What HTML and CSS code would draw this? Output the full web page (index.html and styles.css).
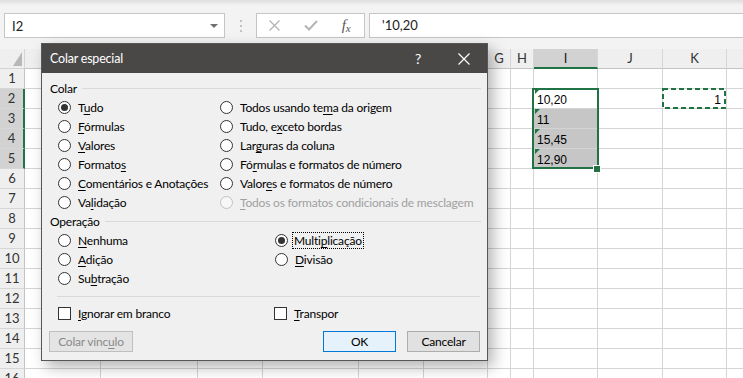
FILE: index.html
```html
<!DOCTYPE html>
<html lang="pt-BR">
<head>
  <meta charset="UTF-8">
  <title>Colar especial</title>
  <link rel="stylesheet" href="styles.css">
</head>
<body>
  <div class="topbar">
    <div class="namebox"><span>I2</span><span class="dd"></span></div>
    <div class="grip"><i></i><i></i><i></i></div>
    <div class="fxbox">
      <span class="fxicon">
        <svg width="11" height="11" viewBox="0 0 11 11"><path d="M0.5 0.5L10.5 10.5M10.5 0.5L0.5 10.5" stroke="#b4b4b4" stroke-width="1.3" fill="none"/></svg>
      </span>
      <span class="fxicon">
        <svg width="14" height="11" viewBox="0 0 14 11"><path d="M1 5.5L5 9.5L13 1" stroke="#b4b4b4" stroke-width="2" fill="none"/></svg>
      </span>
      <span class="fxicon fx"><i>f</i><i class="x">x</i></span>
    </div>
    <div class="formula">'10,20</div>
  </div>

  <div class="sheet" id="sheet"></div>

  <div class="dialog">
    <div class="dlg-title">
      <span class="dlg-caption">Colar especial</span>
      <span class="dlg-btn">?</span>
      <span class="dlg-btn">
        <svg width="12" height="12" viewBox="0 0 12 12"><path d="M0.5 0.5L11.5 11.5M11.5 0.5L0.5 11.5" stroke="#fff" stroke-width="1.2" fill="none"/></svg>
      </span>
    </div>
    <div class="dlg-body">
      <div class="group-label"><span>Colar</span></div>
      <div class="opts paste">
        <label class="opt"><span class="radio on"></span><span>T<u>u</u>do</span></label>
        <label class="opt"><span class="radio"></span><span>Todos usando te<u>m</u>a da origem</span></label>
        <label class="opt"><span class="radio"></span><span><u>F</u>órmulas</span></label>
        <label class="opt"><span class="radio"></span><span>Tudo, e<u>x</u>ceto bordas</span></label>
        <label class="opt"><span class="radio"></span><span><u>V</u>alores</span></label>
        <label class="opt"><span class="radio"></span><span>Lar<u>g</u>uras da coluna</span></label>
        <label class="opt"><span class="radio"></span><span>Formato<u>s</u></span></label>
        <label class="opt"><span class="radio"></span><span>Fó<u>r</u>mulas e formatos de número</span></label>
        <label class="opt"><span class="radio"></span><span><u>C</u>omentários e Anotações</span></label>
        <label class="opt"><span class="radio"></span><span>Valor<u>e</u>s e formatos de número</span></label>
        <label class="opt"><span class="radio"></span><span>Va<u>l</u>idação</span></label>
        <label class="opt disabled"><span class="radio"></span><span><u>T</u>odos os formatos condicionais de mesclagem</span></label>
      </div>
      <div class="group-label"><span>Operação</span></div>
      <div class="opts ops">
        <label class="opt"><span class="radio"></span><span><u>N</u>enhuma</span></label>
        <label class="opt"><span class="radio on"></span><span class="focus">Multi<u>p</u>licação</span></label>
        <label class="opt"><span class="radio"></span><span><u>A</u>dição</span></label>
        <label class="opt"><span class="radio"></span><span><u>D</u>ivisão</span></label>
        <label class="opt"><span class="radio"></span><span>Su<u>b</u>tração</span></label>
      </div>
      <div class="sep"></div>
      <div class="opts checks">
        <label class="opt"><span class="check"></span><span><u>I</u>gnorar em branco</span></label>
        <label class="opt"><span class="check"></span><span><u>T</u>ranspor</span></label>
      </div>
      <div class="dlg-buttons">
        <button class="btn link" disabled>Colar vínc<u>u</u>lo</button>
        <span class="spacer"></span>
        <button class="btn default">OK</button>
        <button class="btn">Cancelar</button>
      </div>
    </div>
  </div>

  <script>
    // columns A-F sit under the dialog and L is past the edge, so only G-K get a label
    const cols = ["A", "B", "C", "D", "E", "F", "G", "H", "I", "J", "K", "L"];
    const shown = ["G", "H", "I", "J", "K"];
    const textCells = { I2: "10,20", I3: "11", I4: "15,45", I5: "12,90" };
    const numberCells = { K2: "1" };
    const sheet = document.getElementById("sheet");

    function add(cls, text) {
      const d = document.createElement("div");
      d.className = cls;
      if (text !== undefined) d.textContent = text;
      sheet.appendChild(d);
      return d;
    }

    add("corner");
    cols.forEach(c => add(c === "I" ? "colhead sel" : "colhead", shown.includes(c) ? c : undefined));

    for (let r = 1; r <= 16; r++) {
      const inSel = r >= 2 && r <= 5;
      add(inSel ? "rowhead sel" : "rowhead", r);
      cols.forEach(c => {
        const ref = c + r;
        let cls = "cell";
        if (c === "I" && r >= 3 && r <= 5) cls += " hl";
        if (textCells[ref]) cls += " txt";
        if (numberCells[ref]) cls += " num";
        const cell = add(cls);

        if (textCells[ref]) {
          cell.innerHTML = '<span class="flag"></span>' + textCells[ref];
        }
        if (numberCells[ref]) {
          cell.textContent = numberCells[ref];
          cell.insertAdjacentHTML("afterbegin",
            '<svg class="ants" width="64" height="21"><rect x="1" y="1" width="62" height="19" fill="none" stroke="#217346" stroke-width="2" stroke-dasharray="5 3"/></svg>');
        }
        if (ref === "I2") {
          cell.insertAdjacentHTML("beforeend", '<span class="selbox"></span><span class="handle"></span>');
        }
      });
    }
  </script>
</body>
</html>
```

FILE: styles.css
```css
html, body {
  margin: 0;
  height: 378px;
  overflow: hidden;
}
body {
  position: relative;
  font-family: "Lato", "Noto Sans", sans-serif;
  background: #fff;
  color: #000;
}

/* formula bar */
.topbar {
  height: 49px;
  box-sizing: border-box;
  padding-top: 13px;
  display: flex;
  align-items: flex-start;
  background: linear-gradient(#dedede 0, #e9e9e9 3px, #f3f3f3 5px);
}
.namebox {
  margin-left: 4px;
  width: 221px;
  height: 25px;
  box-sizing: border-box;
  border: 1px solid #c6c6c6;
  background: #fff;
  display: flex;
  align-items: center;
  justify-content: space-between;
  padding: 0 6px 0 7px;
  font-size: 13px;
  color: #222;
}
.dd {
  width: 0;
  height: 0;
  border-left: 4px solid transparent;
  border-right: 4px solid transparent;
  border-top: 4px solid #707070;
}
.grip {
  width: 31px;
  height: 25px;
  display: flex;
  flex-direction: column;
  align-items: center;
  justify-content: center;
  gap: 3px;
}
.grip i {
  width: 2px;
  height: 2px;
  background: #c2c2c2;
}
.fxbox {
  width: 109px;
  height: 25px;
  box-sizing: border-box;
  border: 1px solid #c6c6c6;
  background: #fff;
  display: flex;
}
.fxicon {
  width: 36px;
  display: flex;
  align-items: center;
  justify-content: center;
}
.fx {
  font-family: "Liberation Serif", serif;
  font-size: 15px;
  color: #555;
}
.fx .x {
  font-size: 11px;
  margin-top: 4px;
}
.formula {
  flex: 1;
  margin-left: 4px;
  height: 25px;
  box-sizing: border-box;
  border: 1px solid #c6c6c6;
  border-right: none;
  background: #fff;
  padding-left: 12px;
  font-size: 13px;
  line-height: 23px;
  color: #222;
}

/* sheet grid */
.sheet {
  display: grid;
  grid-template-columns: 25px 76px 97px 65px 96px 65px 64px 23px 23px 64px 65px 64px 64px;
  grid-auto-rows: 20px;
  width: 743px;
  overflow: hidden;
  font-size: 12px;
}
.sheet > div {
  box-sizing: border-box;
  border-right: 1px solid #d4d4d4;
  border-bottom: 1px solid #d4d4d4;
  position: relative;
}
.corner {
  background: #efefef;
}
.corner::after {
  content: "";
  position: absolute;
  right: 2px;
  bottom: 2px;
  border-left: 9px solid transparent;
  border-bottom: 14px solid #b7b7b7;
}
.sheet > .colhead {
  background: #efefef;
  border-right-color: #d6d6d6;
  border-bottom-color: #c4c4c4;
  text-align: center;
  line-height: 19px;
  color: #333;
  font-size: 13px;
}
.sheet > .colhead.sel {
  background: #d2d2d2;
  border-bottom: 2px solid #217346;
  color: #1b1b1b;
}
.sheet > .rowhead {
  background: #efefef;
  border-right-color: #c4c4c4;
  border-bottom-color: #d6d6d6;
  text-align: center;
  line-height: 19px;
  color: #333;
  font-size: 13px;
}
.sheet > .rowhead.sel {
  background: #d2d2d2;
  border-right: 2px solid #217346;
}
.cell.hl {
  background: #c6c6c6;
}
.cell.txt, .cell.num {
  display: flex;
  align-items: flex-end;
  padding: 0 3px 1px;
  font-family: "Liberation Sans", sans-serif;
  font-size: 12px;
  line-height: 14px;
}
.cell.num {
  justify-content: flex-end;
  padding-right: 5px;
}
.flag {
  position: absolute;
  left: 1px;
  top: 0;
  border-top: 5px solid #217346;
  border-right: 5px solid transparent;
}
.selbox {
  position: absolute;
  left: -2px;
  top: -1px;
  width: 67px;
  height: 81px;
  box-sizing: border-box;
  border: 2px solid #217346;
  z-index: 2;
}
.handle {
  position: absolute;
  left: 59px;
  top: 76px;
  width: 6px;
  height: 6px;
  background: #217346;
  border: 1px solid #fff;
  z-index: 3;
}
.ants {
  position: absolute;
  left: -1px;
  top: -1px;
}

/* dialog */
.dialog {
  position: absolute;
  left: 41px;
  top: 43px;
  width: 447px;
  height: 318px;
  box-sizing: border-box;
  border: 1px solid #575757;
  background: #f0f0f0;
  box-shadow: 5px 6px 14px rgba(0, 0, 0, 0.3);
  font-size: 12px;
  letter-spacing: -0.2px;
  z-index: 10;
}
.dlg-title {
  height: 29px;
  background: #4a4846;
  display: flex;
  align-items: center;
  color: #fff;
}
.dlg-caption {
  flex: 1;
  padding-left: 8px;
  font-size: 12.5px;
}
.dlg-btn {
  width: 46px;
  height: 29px;
  display: flex;
  align-items: center;
  justify-content: center;
  font-size: 14px;
}
.dlg-body {
  padding: 6px 6px 0 8px;
}
.group-label {
  height: 19px;
  display: flex;
  align-items: center;
  gap: 5px;
}
.group-label::after {
  content: "";
  flex: 1;
  border-top: 1px solid #d9d9d9;
}
.opts {
  display: grid;
  grid-auto-rows: 19px;
  padding-left: 8px;
}
.paste {
  grid-template-columns: 162px 1fr;
}
.ops {
  grid-template-columns: 217px 1fr;
  grid-auto-flow: column;
  grid-template-rows: repeat(3, 19px);
}
.ops .opt:nth-child(2) {
  grid-column: 2;
  grid-row: 1;
}
.ops .opt:nth-child(4) {
  grid-column: 2;
  grid-row: 2;
}
.checks {
  grid-template-columns: 216px 1fr;
}
.opt {
  display: flex;
  align-items: center;
  gap: 7px;
  white-space: nowrap;
}
.opt u, .btn u {
  text-decoration-skip-ink: none;
  text-underline-offset: 2px;
}
.radio {
  width: 13px;
  height: 13px;
  flex: none;
  box-sizing: border-box;
  border: 1px solid #333;
  border-radius: 50%;
  background: #fff;
  display: flex;
  align-items: center;
  justify-content: center;
}
.radio.on::after {
  content: "";
  width: 7px;
  height: 7px;
  border-radius: 50%;
  background: #333;
}
.opt.disabled {
  color: #a0a0a0;
}
.opt.disabled .radio {
  border-color: #c2c2c2;
  background: #f7f7f7;
}
.focus {
  outline: 1px dotted #000;
  padding: 0 1px;
  margin-left: -2px;
}
.check {
  width: 13px;
  height: 13px;
  flex: none;
  box-sizing: border-box;
  border: 1px solid #333;
  background: #fff;
}
.sep {
  height: 1px;
  background: #d9d9d9;
  margin: 8px 1px 7px 7px;
}
.dlg-buttons {
  display: flex;
  gap: 11px;
  margin-top: 8px;
  padding-right: 1px;
}
.spacer {
  flex: 1;
}
.btn {
  height: 21px;
  width: 73px;
  box-sizing: border-box;
  border: 1px solid #adadad;
  background: #e1e1e1;
  font-family: inherit;
  font-size: 12px;
  letter-spacing: inherit;
  color: #000;
  padding: 0;
}
.btn.link {
  width: 84px;
  margin-left: -1px;
  border-color: #bfbfbf;
  background: #e4e4e4;
  color: #8a8a8a;
}
.btn.default {
  border-color: #0078d7;
  background: #e5f1fb;
}
```
